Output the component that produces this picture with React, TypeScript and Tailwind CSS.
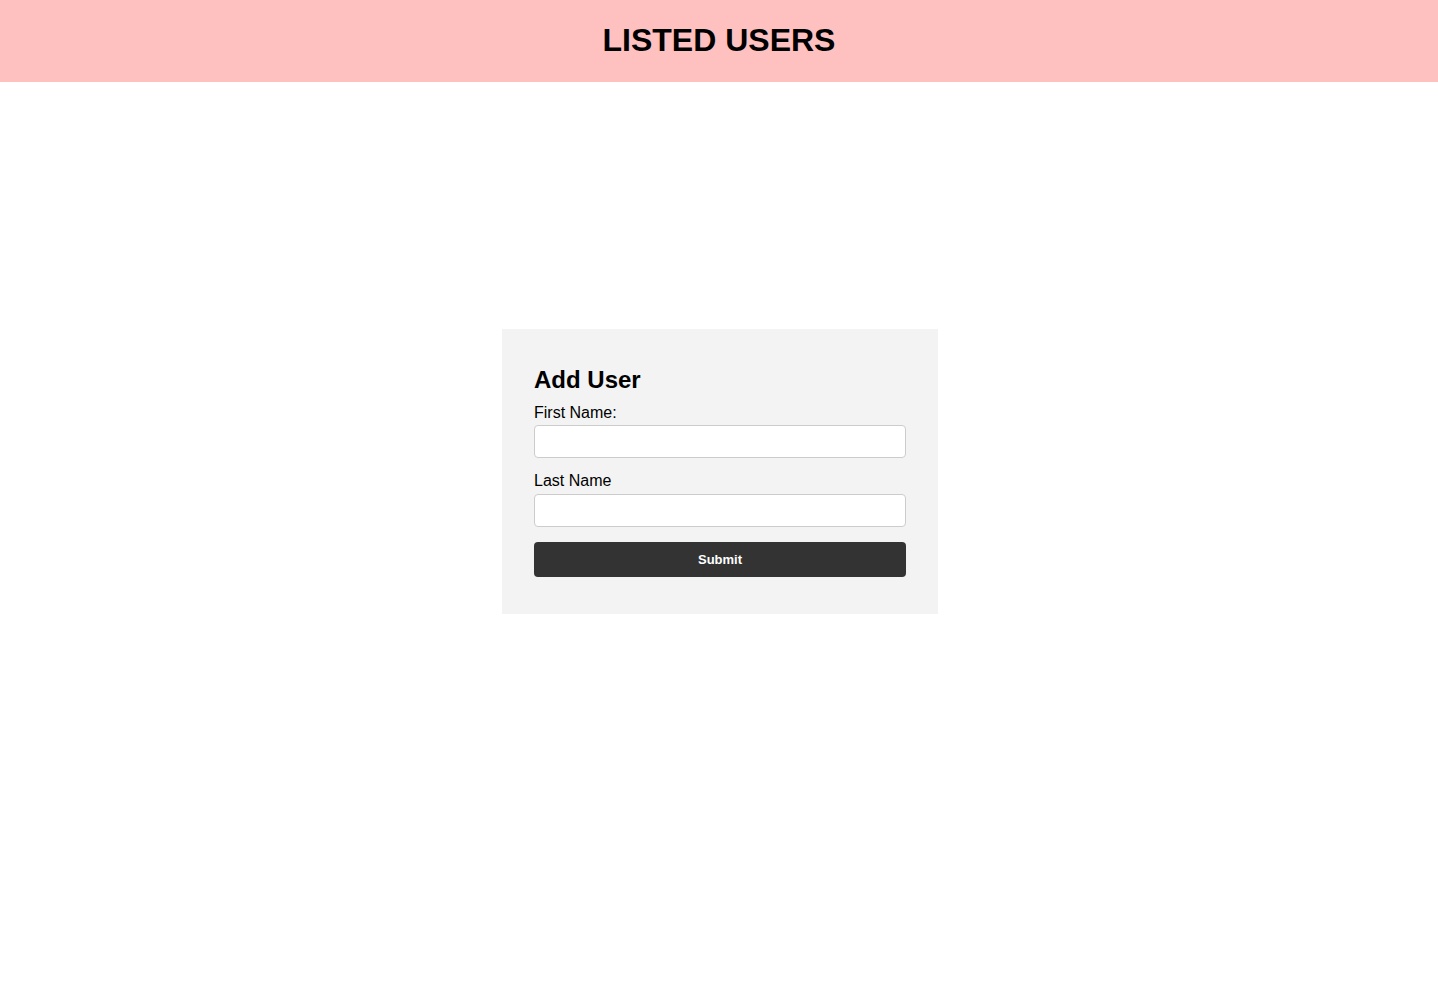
export default function App() {
  return (
    <div className="min-h-screen bg-white text-black font-['Liberation_Sans',Arial,sans-serif]">
      <header className="h-[82px] bg-[#ffc0c0] text-center">
        <h1 className="pt-[22px] text-[32px] leading-[37px] font-bold">LISTED USERS</h1>
      </header>

      <main className="flex justify-center pt-[247px] pl-[2px]">
        <form
          className="w-[436px] bg-[#f3f3f3] px-8 pt-8 pb-[37px] flex flex-col"
          onSubmit={(e) => e.preventDefault()}
        >
          <h2 className="mt-[5px] mb-[10px] text-[24px] leading-[28px] font-bold">Add User</h2>

          <label htmlFor="firstName" className="mb-[3px] text-[16px] leading-[18px]">
            First Name:
          </label>
          <input
            id="firstName"
            type="text"
            className="mb-[14px] h-[33px] w-full rounded border border-[#cccccc] bg-white px-2 text-[16px] outline-none"
          />

          <label htmlFor="lastName" className="mb-[4px] text-[16px] leading-[18px]">
            Last Name
          </label>
          <input
            id="lastName"
            type="text"
            className="mb-[15px] h-[33px] w-full rounded border border-[#cccccc] bg-white px-2 text-[16px] outline-none"
          />

          <button
            type="submit"
            className="h-[35px] w-full rounded bg-[#333333] text-[13px] font-bold text-white"
          >
            Submit
          </button>
        </form>
      </main>
    </div>
  );
}
